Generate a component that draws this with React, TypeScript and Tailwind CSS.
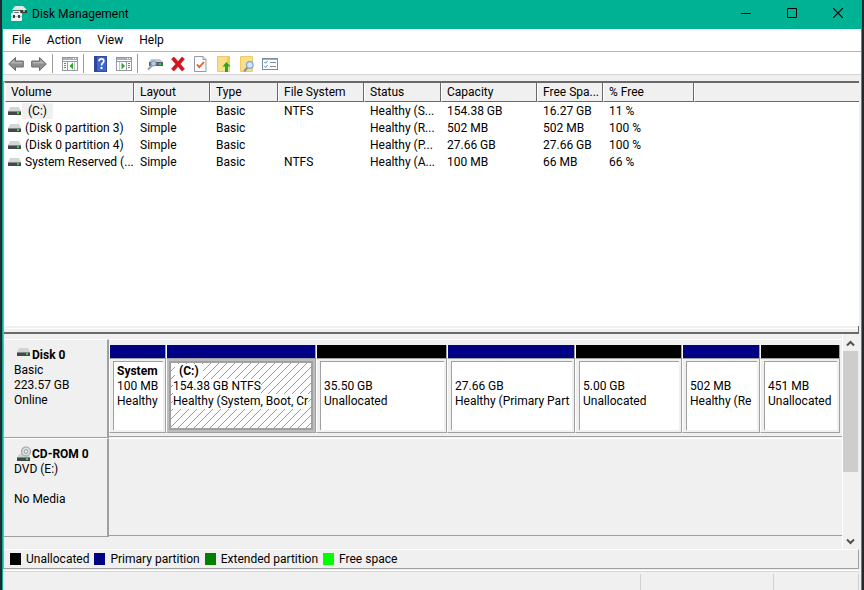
import React from 'react';

interface Volume {
  name: string;
  layout: string;
  type: string;
  fs: string;
  status: string;
  capacity: string;
  free: string;
  percent: string;
}

interface Partition {
  label?: string;
  size: string;
  status: string;
  kind: 'primary' | 'unallocated';
  weight: number;
  selected?: boolean;
}

const volumes: Volume[] = [
  { name: '(C:)', layout: 'Simple', type: 'Basic', fs: 'NTFS', status: 'Healthy (S...', capacity: '154.38 GB', free: '16.27 GB', percent: '11 %' },
  { name: '(Disk 0 partition 3)', layout: 'Simple', type: 'Basic', fs: '', status: 'Healthy (R...', capacity: '502 MB', free: '502 MB', percent: '100 %' },
  { name: '(Disk 0 partition 4)', layout: 'Simple', type: 'Basic', fs: '', status: 'Healthy (P...', capacity: '27.66 GB', free: '27.66 GB', percent: '100 %' },
  { name: 'System Reserved (...', layout: 'Simple', type: 'Basic', fs: 'NTFS', status: 'Healthy (A...', capacity: '100 MB', free: '66 MB', percent: '66 %' },
];

const partitions: Partition[] = [
  { label: 'System', size: '100 MB', status: 'Healthy', kind: 'primary', weight: 57 },
  { label: '(C:)', size: '154.38 GB NTFS', status: 'Healthy (System, Boot, Cr', kind: 'primary', weight: 150, selected: true },
  { size: '35.50 GB', status: 'Unallocated', kind: 'unallocated', weight: 131 },
  { size: '27.66 GB', status: 'Healthy (Primary Part', kind: 'primary', weight: 128 },
  { size: '5.00 GB', status: 'Unallocated', kind: 'unallocated', weight: 107 },
  { size: '502 MB', status: 'Healthy (Re', kind: 'primary', weight: 78 },
  { size: '451 MB', status: 'Unallocated', kind: 'unallocated', weight: 80 },
];

const columns = [
  { title: 'Volume', width: 'w-[129px]' },
  { title: 'Layout', width: 'w-[76px]' },
  { title: 'Type', width: 'w-[68px]' },
  { title: 'File System', width: 'w-[86px]' },
  { title: 'Status', width: 'w-[77px]' },
  { title: 'Capacity', width: 'w-[96px]' },
  { title: 'Free Spa...', width: 'w-[66px]' },
  { title: '% Free', width: 'w-[91px]' },
];

const legend = [
  { label: 'Unallocated', color: 'bg-black' },
  { label: 'Primary partition', color: 'bg-[#000084]' },
  { label: 'Extended partition', color: 'bg-[#008000]' },
  { label: 'Free space', color: 'bg-[#00ff00]' },
];

const DriveIcon = () => (
  <svg width="13" height="8" viewBox="0 0 13 8" className="shrink-0" aria-hidden="true">
    <path d="M2 0h9l2 4H0z" fill="#d3d5d7" />
    <rect y="4" width="13" height="4" fill="#45484b" />
    <rect y="4" width="13" height="1" fill="#85888b" />
    <rect x="9" y="5" width="2" height="2" fill="#2fe03a" />
  </svg>
);

const CdIcon = () => (
  <svg width="15" height="16" viewBox="0 0 15 16" className="shrink-0" aria-hidden="true">
    <path d="M2 8h9l2 4H0z" fill="#cfd1d3" />
    <circle cx="9" cy="5.500" r="4.500" fill="#dcdedf" stroke="#a0a3a6" strokeWidth="1.200" />
    <circle cx="9" cy="5.500" r="1.800" fill="#f4f4f4" stroke="#94979a" />
    <rect y="11" width="13" height="4" fill="#45484b" />
    <rect y="11" width="13" height="1" fill="#85888b" />
    <rect x="9" y="12" width="2" height="2" fill="#2fe03a" />
  </svg>
);

const AppIcon = () => (
  <svg width="16" height="16" viewBox="0 0 16 16" aria-hidden="true">
    <path d="M4 0h8l4 4H1z" fill="#e3e6e6" />
    <path d="M2 4h14v3H2z" fill="#343b3d" />
    <rect x="12" y="4" width="2" height="2" fill="#4be05c" />
    <path d="M2.500 7V5.500h6V7" fill="none" stroke="#f3f4f4" strokeWidth="1.500" />
    <rect x="0" y="7" width="11" height="8" rx="1" fill="#f1f2f2" />
    <rect x="0" y="10" width="11" height="1" fill="#bfc4c4" />
    <rect x="2" y="9" width="2" height="3" fill="#3a4143" />
    <rect x="7" y="9" width="2" height="3" fill="#3a4143" />
    <rect x="1" y="15" width="10" height="1" fill="#5b8078" />
  </svg>
);

const ArrowIcon = ({ back }: { back?: boolean }) => (
  <svg width="16" height="16" viewBox="0 0 16 16" aria-hidden="true">
    <g transform={back ? undefined : 'matrix(-1 0 0 1 16 0)'}>
      <path d="M.7 8 7.500 1.500V5h7.800v6H7.500v3.500z" fill="#8f8f8f" stroke="#6b6b6b" />
      <path d="M2.500 7.500 6.500 3.700V6h7.800v1.500z" fill="#b4b4b4" />
    </g>
  </svg>
);

const PaneIcon = ({ flip }: { flip?: boolean }) => (
  <svg width="16" height="16" viewBox="0 0 16 16" shapeRendering="crispEdges" aria-hidden="true">
    <rect x="0.500" y="1.500" width="15" height="13" fill="#fff" stroke="#929ba5" />
    <rect x="1" y="2" width="14" height="2" fill="#a5b0bb" />
    <rect x="11" y="2" width="1" height="1" fill="#fff" />
    <rect x="13" y="2" width="1" height="1" fill="#fff" />
    <path d="M1 5.500h14" stroke="#929ba5" />
    <path d={flip ? 'M10.500 6v8' : 'M5.500 6v8'} stroke="#929ba5" />
    <path d={flip ? 'M12 7.500h2M12 9.500h2M12 11.500h2' : 'M2 7.500h2M2 9.500h2M2 11.500h2'} stroke="#6c7f92" />
    <path d={flip ? 'M3.500 6v8' : 'M12.500 6v8'} stroke="#c3c9cf" />
    <path d={flip ? 'M5.500 6.500v7L9 10z' : 'M11 6.500v7L7.500 10z'} fill="#2fa82b" shapeRendering="auto" />
  </svg>
);

const HelpIcon = () => (
  <svg width="13" height="16" viewBox="0 0 13 16" aria-hidden="true">
    <rect x="0.500" y="0.500" width="12" height="15" fill="#3f66c8" stroke="#2f4ca0" />
    <rect x="1" y="1" width="2" height="14" fill="#2a4698" />
    <path d="M5 5.200c0-3.200 4.800-3 4.800-.2 0 2-2.300 2-2.300 4.500" fill="none" stroke="#fff" strokeWidth="1.700" />
    <rect x="6.500" y="11" width="2" height="2" fill="#fff" />
  </svg>
);

const RescanIcon = () => (
  <svg width="16" height="16" viewBox="0 0 16 16" aria-hidden="true">
    <path d="M4 3h9l3 3H2z" fill="#c2c8cc" />
    <path d="M2 6h14v4H2z" fill="#5a6369" />
    <rect x="12" y="7" width="2" height="2" fill="#2ed43b" />
    <path d="M1 13.500 5 9.500" stroke="#9a9ea2" strokeWidth="2" />
    <circle cx="6.500" cy="7.500" r="2.600" fill="#a9cdec" stroke="#7f9ab2" />
  </svg>
);

const DeleteIcon = () => (
  <svg width="16" height="16" viewBox="0 0 16 16" aria-hidden="true">
    <path d="M1.500 3 4 1l4 4.500L12 1l2.500 2-4.200 5 4.200 5-2.500 2-4-4.500L4 15l-2.500-2 4.200-5z" fill="#d8121b" stroke="#a80c12" strokeWidth=".5" />
  </svg>
);

const PropertiesIcon = () => (
  <svg width="13" height="16" viewBox="0 0 13 16" aria-hidden="true">
    <path d="M.5.5h8.500l3 3v12H.5z" fill="#fbfbfd" stroke="#949aa6" />
    <path d="M9 .5v3h3" fill="#dfe3ea" stroke="#949aa6" />
    <path d="m3 8.500 2.300 2.700L10 6" fill="none" stroke="#ec5a24" strokeWidth="1.800" />
  </svg>
);

const FolderUpIcon = () => (
  <svg width="16" height="16" viewBox="0 0 16 16" aria-hidden="true">
    <path d="M1.500.5h12v15h-12z" fill="#fade88" stroke="#ebca6b" />
    <path d="M11 .5h2.500V7H11z" fill="#f3cc60" />
    <path d="M10.500 6 14.500 10.500h-2.500V16H9v-5.500H6.500z" fill="#2ba52a" />
  </svg>
);

const FolderSearchIcon = () => (
  <svg width="16" height="16" viewBox="0 0 16 16" aria-hidden="true">
    <path d="M1.500.5h12v15h-12z" fill="#fade88" stroke="#ebca6b" />
    <path d="M5 15.500 8.500 11.500" stroke="#8b8f93" strokeWidth="2" />
    <circle cx="10.800" cy="9" r="3.300" fill="#cfe7f8" stroke="#7ea6c8" strokeWidth="1.200" />
  </svg>
);

const ListIcon = () => (
  <svg width="16" height="14" viewBox="0 0 16 14" aria-hidden="true">
    <rect x="0.500" y="1.500" width="15" height="11" fill="#fdfdfe" stroke="#808b98" />
    <path d="M1 2.500h14" stroke="#a5b0bb" />
    <path d="m2.500 5 1 1.200L5.500 4M2.500 9.200l1 1.200L5.500 8.200" fill="none" stroke="#3c82c8" />
    <path d="M8 5.500h6M8 9.500h6" stroke="#808b98" />
  </svg>
);

const ToolButton = ({ label, children }: { label: string; children: React.ReactNode }) => (
  <button type="button" aria-label={label} className="flex h-[22px] w-[23px] items-center justify-center hover:bg-[#e5f3ff]">
    {children}
  </button>
);

const Separator = () => <span className="ml-0.5 h-[19px] w-1.5 border-l border-[#9b9b9b]" />;

const TitleBar = () => (
  <header className="flex h-[29px] items-stretch bg-[#00b294]">
    <div className="flex flex-1 items-center gap-[5px] pb-px pl-2">
      <AppIcon />
      <h1>Disk Management</h1>
    </div>
    <button type="button" aria-label="Minimize" className="flex w-[46px] items-center justify-center pb-1">
      <svg width="10" height="10" viewBox="0 0 10 10"><path d="M0 5.500h10" stroke="#000" /></svg>
    </button>
    <button type="button" aria-label="Maximize" className="flex w-[46px] items-center justify-center pb-1">
      <svg width="10" height="10" viewBox="0 0 10 10"><path d="M.5.5h9v9h-9z" fill="none" stroke="#000" /></svg>
    </button>
    <button type="button" aria-label="Close" className="flex w-[46px] items-center justify-center pb-1">
      <svg width="10" height="10" viewBox="0 0 10 10"><path d="m0 0 10 10M10 0 0 10" stroke="#000" strokeWidth="1.200" /></svg>
    </button>
  </header>
);

const Toolbar = () => (
  <div className="flex h-[23px] items-center border-b border-[#d5d5d5] bg-white pt-px pl-px">
    <ToolButton label="Back"><ArrowIcon back /></ToolButton>
    <ToolButton label="Forward"><ArrowIcon /></ToolButton>
    <Separator />
    <ToolButton label="Show console tree"><PaneIcon /></ToolButton>
    <Separator />
    <ToolButton label="Help"><HelpIcon /></ToolButton>
    <ToolButton label="Show action pane"><PaneIcon flip /></ToolButton>
    <Separator />
    <ToolButton label="Rescan disks"><RescanIcon /></ToolButton>
    <ToolButton label="Delete"><DeleteIcon /></ToolButton>
    <ToolButton label="Properties"><PropertiesIcon /></ToolButton>
    <ToolButton label="Open"><FolderUpIcon /></ToolButton>
    <ToolButton label="Explore"><FolderSearchIcon /></ToolButton>
    <ToolButton label="Settings"><ListIcon /></ToolButton>
  </div>
);

const VolumeTable = () => (
  <table className="w-full table-fixed border-separate border-spacing-0 text-left">
    <thead>
      <tr className="h-[19px] bg-[#f0f0f0]">
        {columns.map((col) => (
          <th
            key={col.title}
            className={`${col.width} border-r border-b border-l border-[#696969] border-l-white p-0 pl-[5px] font-normal whitespace-nowrap`}
          >
            {col.title}
          </th>
        ))}
        <td className="border-b border-l border-[#696969] border-l-white p-0" />
      </tr>
    </thead>
    <tbody>
      {volumes.map((v, i) => (
        <tr key={v.name} className="h-[17px] whitespace-nowrap">
          <td className="p-0 pl-[3px]">
            <div className="flex items-center">
              <DriveIcon />
              <span className={i === 0 ? 'ml-px bg-[#f0f0f0] pr-1.5 pl-1.5' : 'pl-1'}>{v.name}</span>
            </div>
          </td>
          <td className="p-0 pl-1.5">{v.layout}</td>
          <td className="p-0 pl-1.5">{v.type}</td>
          <td className="p-0 pl-1.5">{v.fs}</td>
          <td className="p-0 pl-1.5">{v.status}</td>
          <td className="p-0 pl-1.5">{v.capacity}</td>
          <td className="p-0 pl-1.5">{v.free}</td>
          <td className="p-0 pl-1.5">{v.percent}</td>
          <td className="p-0" />
        </tr>
      ))}
    </tbody>
  </table>
);

const Hatch = () => (
  <svg className="absolute inset-0 h-full w-full" aria-hidden="true">
    <defs>
      <pattern id="hatch" width="8" height="8" patternUnits="userSpaceOnUse">
        <path d="M-1 9 9-1M-1 1 1-1M7 9l2-2" stroke="#9a9a9a" strokeWidth="1" />
      </pattern>
    </defs>
    <rect width="100%" height="100%" fill="url(#hatch)" />
  </svg>
);

const PartitionCell: React.FC<{ part: Partition }> = ({ part }) => (
  <div className="flex min-w-0 basis-0 flex-col" style={{ flexGrow: part.weight }}>
    <div className="border-r border-l border-r-[#a0a0a0] border-l-white">
      <div className={`h-[13px] ${part.kind === 'primary' ? 'bg-[#000084]' : 'bg-black'}`} />
    </div>
    <div className={`h-[75px] border border-[#a0a0a0] border-l-white p-0.5 ${part.selected ? 'bg-[#bdbdbd]' : 'bg-[#f0f0f0]'}`}>
      <div
        className={`relative h-full overflow-hidden bg-white leading-[15px] whitespace-nowrap ${
          part.selected ? 'border-2 border-[#a0a0a0] pt-px pl-0.5' : 'ml-px border-t border-l border-[#a0a0a0] pt-0.5 pl-[3px]'
        }`}
      >
        {part.selected && <Hatch />}
        <div className="relative h-[15px] font-bold">
          {part.label && <span className={part.selected ? 'ml-0.5 inline-block bg-white px-1' : ''}>{part.label}</span>}
        </div>
        <div className="relative h-[15px]"><span className="inline-block bg-white">{part.size}</span></div>
        <div className="relative h-[15px]"><span className="inline-block bg-white">{part.status}</span></div>
      </div>
    </div>
  </div>
);

const Chevron = ({ down }: { down?: boolean }) => (
  <svg width="9" height="7" viewBox="0 0 9 7" aria-hidden="true">
    <path d={down ? 'm1 1.500 3.500 3.500L8 1.500' : 'M1 5.500 4.500 2 8 5.500'} fill="none" stroke="#505050" strokeWidth="2" />
  </svg>
);

const DiskPane = () => (
  <section className="flex bg-[#f0f0f0]">
    <div className="min-w-0 flex-1 border-r border-white pt-[5px] pb-3">
      <div className="flex">
        <div className="h-[99px] w-[105px] border-t border-r-2 border-b border-t-white border-r-[#a0a0a0] border-b-[#a0a0a0] pt-2 pl-2.5 leading-[15px]">
          <div className="flex pl-[3px]">
            <DriveIcon />
            <h2 className="pl-0.5 font-bold">Disk 0</h2>
          </div>
          <p>Basic</p>
          <p>223.57 GB</p>
          <p>Online</p>
        </div>
        <div className="flex h-[98px] min-w-0 flex-1 border-t border-b border-t-white border-b-[#a0a0a0] pt-[5px] pr-0.5">
          {partitions.map((part, i) => (
            <PartitionCell key={i} part={part} />
          ))}
        </div>
      </div>
      <div className="flex">
        <div className="h-[99px] w-[105px] border-t border-r-2 border-b border-[#a0a0a0] border-t-white pt-2 pl-2.5 leading-[15px]">
          <div className="flex h-[15px] items-end pl-[3px]">
            <CdIcon />
            <h2 className="font-bold">CD-ROM 0</h2>
          </div>
          <p>DVD (E:)</p>
          <p className="pt-[15px]">No Media</p>
        </div>
        <div className="h-[98px] flex-1 border-t border-b border-t-white border-b-[#a0a0a0]" />
      </div>
    </div>
    <div className="mr-px flex w-[15px] flex-col items-center pt-0.5">
      <button type="button" aria-label="Scroll up" className="flex h-[15px] w-full items-center justify-center"><Chevron /></button>
      <div className="h-[121px] w-full bg-[#cdcdcd]" />
      <div className="flex-1" />
      <button type="button" aria-label="Scroll down" className="flex h-[15px] w-full items-center justify-center"><Chevron down /></button>
    </div>
  </section>
);

export default function App() {
  return (
    <div className="flex min-h-screen bg-[#23292c] px-0.5 font-['Roboto','Liberation_Sans',sans-serif] text-xs text-black">
      <div className="flex min-w-0 flex-1 flex-col border-x border-[#00b294] bg-[#f0f0f0]">
        <TitleBar />
        <nav className="flex h-[23px] items-center border-b border-[#b5b5b5] bg-white pl-px">
          {['File', 'Action', 'View', 'Help'].map((item) => (
            <button key={item} type="button" className="px-2 hover:bg-[#e5f3ff]">{item}</button>
          ))}
        </nav>
        <Toolbar />

        <main className="mt-1.5 mr-0.5 flex flex-1 flex-col border-l border-[#a0a0a0]">
          <div className="flex-1 border-t-2 border-l border-t-[#696969] border-l-white bg-white">
            <VolumeTable />
          </div>
          <div className="flex h-2 flex-col border-r border-b-2 border-[#696969] pt-0.5">
            <div className="h-px bg-white" />
          </div>
          <DiskPane />
          <footer className="flex h-5 items-center border-t border-r border-b border-t-white border-r-[#a0a0a0] border-b-[#a0a0a0] pl-1.5">
            {legend.map((item) => (
              <span key={item.label} className="flex items-center gap-[5px] pr-[5px]">
                <span className={`h-3 w-[11px] ${item.color}`} />
                {item.label}
              </span>
            ))}
          </footer>
        </main>

        <div className="mt-px mr-0.5 flex h-5 flex-col border-t border-white">
          <div className="flex flex-1 border-t border-[#d9d9d9] pt-0.5">
            <div className="flex-1" />
            <div className="w-[133px] border-l border-[#d0d0d0]" />
            <div className="w-[86px] border-x border-[#d0d0d0]" />
          </div>
        </div>
      </div>
    </div>
  );
}
